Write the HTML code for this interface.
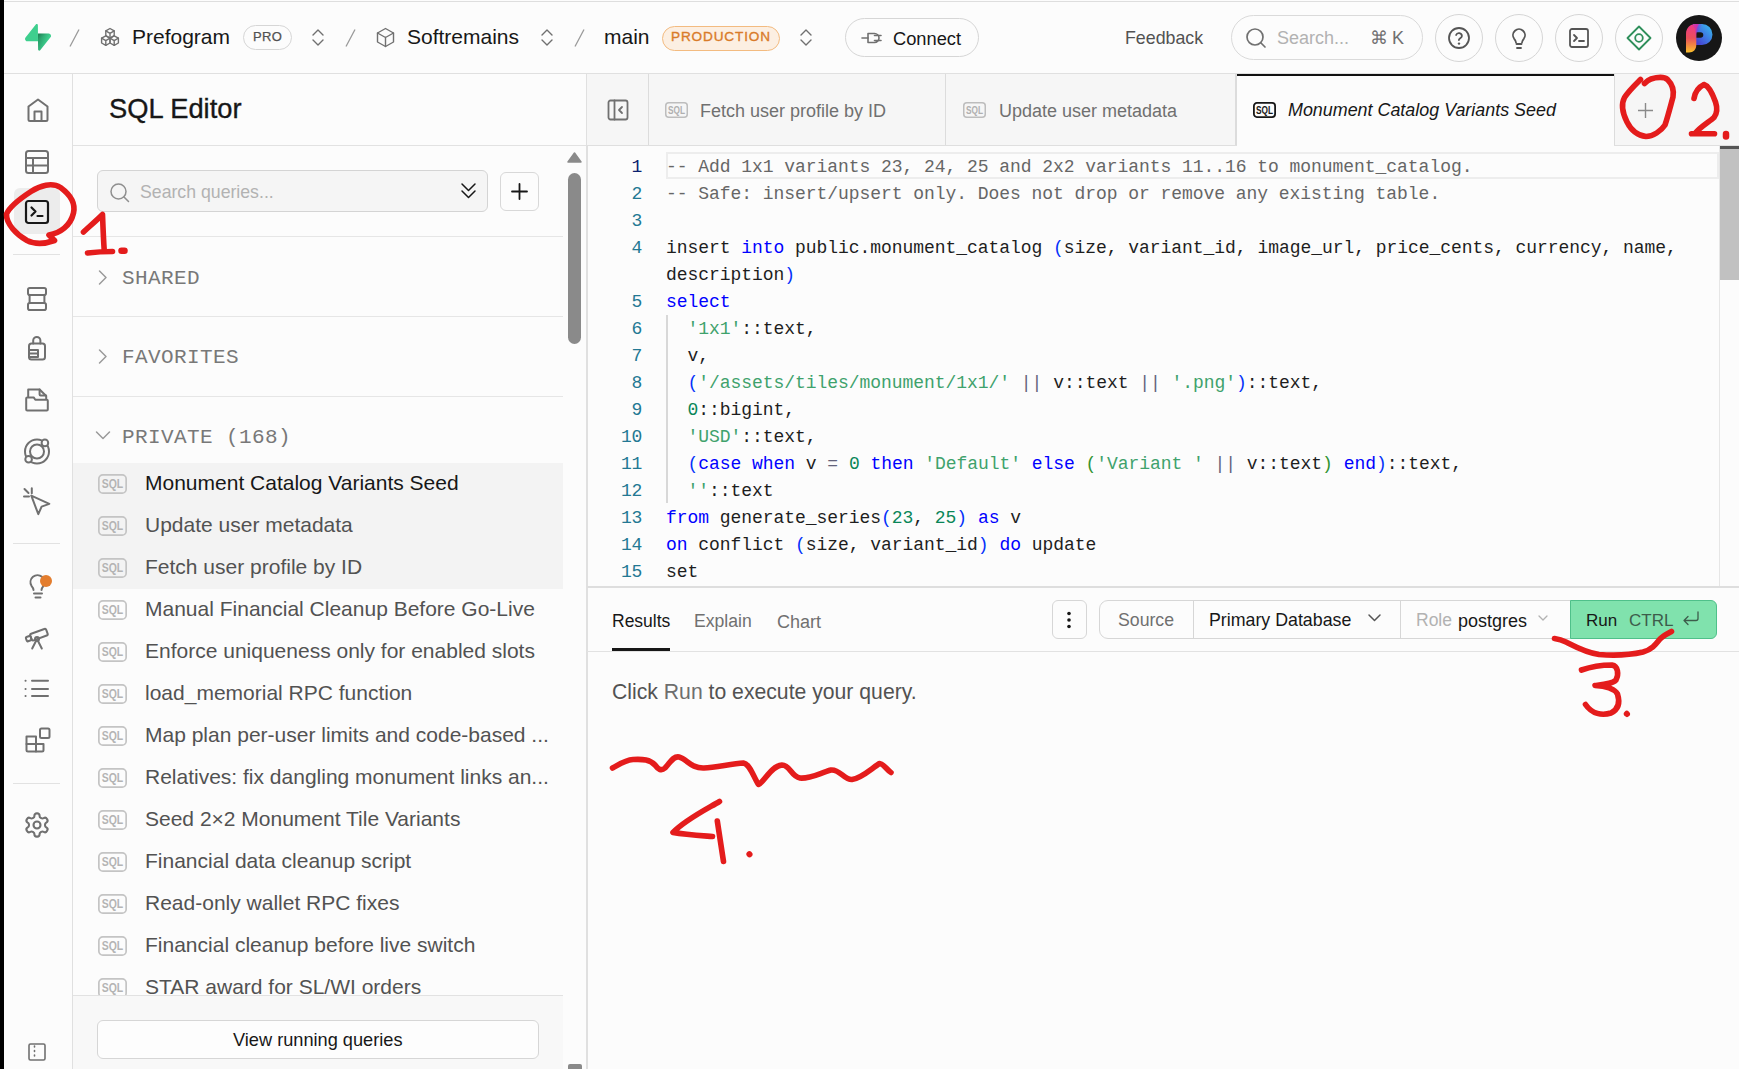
<!DOCTYPE html>
<html><head><meta charset="utf-8">
<style>
*{box-sizing:border-box;margin:0;padding:0}
html,body{width:1739px;height:1069px;overflow:hidden;background:#fcfcfc;font-family:"Liberation Sans",sans-serif;color:#171717}
.a{position:absolute}
svg{display:block}
#strip{left:0;top:0;width:4px;height:1069px;background:#000}
#topline{left:4px;top:1px;width:1735px;height:1px;background:#dedede}
.hb{border-bottom:1px solid #e0e0e0}
.t{white-space:nowrap;position:absolute;line-height:1}
.ic{stroke:#707070;fill:none;stroke-width:2;stroke-linecap:round;stroke-linejoin:round}
.sq{position:absolute;left:98px;width:29px;height:20px;border:1.6px solid #c2c2c2;border-radius:4px}
.sq span{position:absolute;left:3px;top:3.5px;font-size:12.5px;line-height:1;font-weight:bold;color:#b4b4b4;transform:scaleX(.78);transform-origin:0 0;letter-spacing:.3px}
.sqt{position:absolute;top:102px;width:23px;height:17px;border:1.5px solid #b8b8b8;border-radius:3px}
.sqt span{position:absolute;left:2.5px;top:2.5px;font-size:10.5px;line-height:1;font-weight:bold;color:#a8a8a8;transform:scaleX(.8);transform-origin:0 0;letter-spacing:.2px}
.sqt.dk{border:2px solid #171717}.sqt.dk span{color:#171717;left:2px;top:2px}
.cl{white-space:pre;height:27px}.ln{color:#237893}.ln.cur{color:#0b216f}
.k{color:#0000ff}.s{color:#3fa26c}.n{color:#098658}.b1{color:#0431fa}.b2{color:#319331}.o{color:#62627a}.c{color:#666}
</style></head><body>
<div id="strip" class="a"></div>
<div id="topline" class="a"></div>

<!-- HEADER -->
<svg class="a" style="left:25px;top:24px" width="26" height="27" viewBox="0 0 109 113"><defs><linearGradient id="g0" x1="53.97" y1="54.97" x2="94.16" y2="71.83" gradientUnits="userSpaceOnUse"><stop stop-color="#249361"/><stop offset="1" stop-color="#3ECF8E"/></linearGradient><linearGradient id="g1" x1="36.16" y1="30.58" x2="54.48" y2="65.08" gradientUnits="userSpaceOnUse"><stop/><stop offset="1" stop-opacity="0"/></linearGradient></defs><path d="M63.7 110.3C60.8 113.9 55 111.9 55 107.3L54 40.1H99.2C107.4 40.1 112 49.5 106.9 55.9L63.7 110.3Z" fill="url(#g0)"/><path d="M63.7 110.3C60.8 113.9 55 111.9 55 107.3L54 40.1H99.2C107.4 40.1 112 49.5 106.9 55.9L63.7 110.3Z" fill="url(#g1)" fill-opacity=".2"/><path d="M45.3 2.1C48.2-1.5 54-0.4 54 5L54.5 72.3H9.8C1.6 72.3-2.9 62.8 2.2 56.4L45.3 2.1Z" fill="#3ECF8E"/></svg>
<svg class="a" style="left:68px;top:28px" width="13" height="20"><path d="M11 1.5 2 18.5" stroke="#9a9a9a" stroke-width="1.3" fill="none"/></svg>
<svg class="a" style="left:99px;top:27px" width="22" height="21" viewBox="0 0 22 21"><g class="ic" style="stroke:#707070;stroke-width:1.4"><path d="M11 1.5l4.2 2.4v4.8L11 11.1 6.8 8.7V3.9z"/><path d="M6.8 3.9 11 6.3l4.2-2.4M11 6.3v4.8"/><path d="M6.8 8.8l4.2 2.4v4.8L6.8 18.4 2.6 16V11.2z"/><path d="M2.6 11.2l4.2 2.4 4.2-2.4M6.8 13.6v4.8"/><path d="M15.2 8.8l4.2 2.4v4.8l-4.2 2.4L11 16V11.2z"/><path d="M11 11.2l4.2 2.4 4.2-2.4M15.2 13.6v4.8"/></g></svg>
<div class="t" style="left:132px;top:26px;font-size:21px;color:#171717">Prefogram</div>
<div class="a" style="left:243px;top:25px;width:49px;height:25px;border:1px solid #d6d6d6;border-radius:13px"></div>
<div class="t" style="left:253px;top:30px;font-size:13px;letter-spacing:.4px;color:#525252;-webkit-text-stroke:.25px #525252">PRO</div>
<svg class="a" style="left:310px;top:28px" width="16" height="19" viewBox="0 0 16 19"><path class="ic" style="stroke-width:1.4" d="M3 7l5-5 5 5M3 12l5 5 5-5"/></svg>
<svg class="a" style="left:344px;top:28px" width="13" height="20"><path d="M11 1.5 2 18.5" stroke="#9a9a9a" stroke-width="1.3" fill="none"/></svg>
<svg class="a" style="left:375px;top:27px" width="21" height="21" viewBox="0 0 21 21"><g class="ic" style="stroke-width:1.4"><path d="M10.5 1.5l8 4.5v9l-8 4.5-8-4.5V6z"/><path d="M2.5 6l8 4.5 8-4.5M10.5 10.5v9"/></g></svg>
<div class="t" style="left:407px;top:26px;font-size:21px;color:#171717">Softremains</div>
<svg class="a" style="left:539px;top:28px" width="16" height="19" viewBox="0 0 16 19"><path class="ic" style="stroke-width:1.4" d="M3 7l5-5 5 5M3 12l5 5 5-5"/></svg>
<svg class="a" style="left:573px;top:28px" width="13" height="20"><path d="M11 1.5 2 18.5" stroke="#9a9a9a" stroke-width="1.3" fill="none"/></svg>
<div class="t" style="left:604px;top:26px;font-size:21px;color:#171717">main</div>
<div class="a" style="left:662px;top:26px;width:118px;height:25px;border:1px solid #f3bb80;background:#fcefe2;border-radius:13px"></div>
<div class="t" style="left:671px;top:30px;font-size:13.6px;letter-spacing:.85px;color:#d97b29;-webkit-text-stroke:.35px #d97b29">PRODUCTION</div>
<svg class="a" style="left:798px;top:28px" width="16" height="19" viewBox="0 0 16 19"><path class="ic" style="stroke-width:1.4" d="M3 7l5-5 5 5M3 12l5 5 5-5"/></svg>
<div class="a" style="left:845px;top:18px;width:134px;height:39px;border:1px solid #d6d6d6;border-radius:20px"></div>
<svg class="a" style="left:860px;top:30px" width="24" height="16" viewBox="0 0 24 16"><g class="ic" style="stroke-width:1.6"><path d="M2 8h6"/><path d="M8 3.5h6.5a4.5 4.5 0 0 1 0 9H8z"/><path d="M14.5 5.5H21M14.5 10.5H21"/></g></svg>
<div class="t" style="left:893px;top:30px;font-size:18.3px;color:#171717">Connect</div>
<div class="t" style="left:1125px;top:30px;font-size:17.8px;color:#525252">Feedback</div>
<div class="a" style="left:1231px;top:15px;width:192px;height:45px;border:1px solid #dadada;border-radius:23px"></div>
<svg class="a" style="left:1244px;top:26px" width="24" height="24" viewBox="0 0 24 24"><g class="ic" style="stroke-width:1.7"><circle cx="11" cy="11" r="8"/><path d="M17 17l4 4"/></g></svg>
<div class="t" style="left:1277px;top:29px;font-size:18px;color:#b2b2b2">Search...</div>
<div class="t" style="left:1370px;top:29px;font-size:18px;color:#707070">⌘</div>
<div class="t" style="left:1392px;top:29px;font-size:18px;color:#707070">K</div>
<div class="a" style="left:1435px;top:14px;width:48px;height:48px;border:1px solid #d6d6d6;border-radius:50%"></div>
<div class="a" style="left:1495px;top:14px;width:48px;height:48px;border:1px solid #d6d6d6;border-radius:50%"></div>
<div class="a" style="left:1555px;top:14px;width:48px;height:48px;border:1px solid #d6d6d6;border-radius:50%"></div>
<div class="a" style="left:1615px;top:14px;width:48px;height:48px;border:1px solid #d6d6d6;border-radius:50%"></div>
<svg class="a" style="left:1447px;top:26px" width="24" height="24" viewBox="0 0 24 24"><g class="ic" style="stroke:#555;stroke-width:1.8"><circle cx="12" cy="12" r="10"/><path d="M9.1 9a3 3 0 0 1 5.8 1c0 2-3 2.5-3 4"/><path d="M12 17.6h.01" stroke-width="2.4"/></g></svg>
<svg class="a" style="left:1507px;top:26px" width="24" height="24" viewBox="0 0 24 24"><g class="ic" style="stroke:#555;stroke-width:1.8"><path d="M9 16.5c0-1.6-.8-2.6-1.8-3.7A6 6 0 1 1 16.8 12.8c-1 1.1-1.8 2.1-1.8 3.7"/><path d="M9.5 18h5M10 22h4"/></g></svg>
<svg class="a" style="left:1567px;top:26px" width="24" height="24" viewBox="0 0 24 24"><g class="ic" style="stroke:#555;stroke-width:1.8"><rect x="3" y="3" width="18" height="18" rx="2"/><path d="M7 9l3 3-3 3M12 15h5"/></g></svg>
<svg class="a" style="left:1625px;top:24px" width="28" height="28" viewBox="0 0 28 28"><g class="ic" style="stroke:#2f8f5b;stroke-width:1.8"><path d="M14 2.5 25.5 14 14 25.5 2.5 14z"/><circle cx="14" cy="14" r="3.8"/></g></svg>
<div class="a" style="left:1676px;top:15px;width:46px;height:46px;border-radius:50%;background:#161616;overflow:hidden">
<svg width="46" height="46" viewBox="0 0 46 46"><defs><linearGradient id="pa" x1="0" y1="0" x2="0" y2="1"><stop offset="0" stop-color="#f0368a"/><stop offset=".5" stop-color="#e9505a"/><stop offset="1" stop-color="#fbc02a"/></linearGradient><linearGradient id="pb" x1="0" y1="1" x2="1" y2="0"><stop offset="0" stop-color="#4a26c8"/><stop offset=".45" stop-color="#3f6fe0"/><stop offset="1" stop-color="#38c4f0"/></linearGradient><linearGradient id="pc" x1="0" y1="0" x2="1" y2="0"><stop offset="0" stop-color="#b02ad8" stop-opacity="0"/><stop offset=".5" stop-color="#a02ad8" stop-opacity=".9"/><stop offset="1" stop-color="#a02ad8" stop-opacity="0"/></linearGradient></defs>
<path d="M17 9H26A10.5 10.5 0 0 1 26 30H20V22.8H24.5A2.8 2.8 0 0 0 24.5 17.2H17Z" fill="url(#pb)"/>
<path d="M10 19C10 13 14 9 20 9H23C21.5 11 20.3 14 20.3 18V30C20.3 34.5 17.5 37.4 13 37.4H10Z" fill="url(#pa)"/>
<path d="M15 9H27C25 12 22 15 20.3 19V30L19 14z" fill="url(#pc)" opacity=".6"/></svg></div>
<div class="a" style="left:4px;top:73px;width:1735px;height:1px;background:#e0e0e0"></div>

<!-- RAIL -->
<div class="a" style="left:14px;top:188px;width:46px;height:46px;border-radius:6px;background:#ececec"></div>
<div class="a" style="left:13px;top:254px;width:47px;height:1px;background:#e2e2e2"></div>
<div class="a" style="left:13px;top:543px;width:47px;height:1px;background:#e2e2e2"></div>
<div class="a" style="left:13px;top:783px;width:47px;height:1px;background:#e2e2e2"></div>
<!-- home -->
<svg class="a" style="left:25px;top:97px" width="26" height="26" viewBox="0 0 26 26"><g class="ic" style="stroke-width:2"><path d="M3.5 22.5V9.5L13 2.5l9.5 7v13a1.5 1.5 0 0 1-1.5 1.5H5A1.5 1.5 0 0 1 3.5 22.5z"/><path d="M9.5 24V14.5h7V24"/></g></svg>
<!-- table -->
<svg class="a" style="left:24px;top:149px" width="26" height="26" viewBox="0 0 26 26"><g class="ic" style="stroke-width:2"><rect x="2" y="2" width="22" height="22" rx="2.5"/><path d="M2 9h22M2 16.5h22M9 9v15"/></g></svg>
<!-- terminal -->
<svg class="a" style="left:24px;top:199px" width="26" height="26" viewBox="0 0 26 26"><g class="ic" style="stroke:#171717;stroke-width:2.2"><rect x="2" y="2" width="22" height="22" rx="2.5"/><path d="M7.5 8.5l4 4-4 4M13.5 17h5"/></g></svg>
<!-- database -->
<svg class="a" style="left:25px;top:286px" width="24" height="26" viewBox="0 0 24 26"><g class="ic" style="stroke-width:2"><rect x="3" y="2" width="18" height="7" rx="1.8"/><path d="M4.6 9v8M19.4 9v8"/><rect x="3" y="17" width="18" height="7" rx="1.8"/></g></svg>
<!-- lock -->
<svg class="a" style="left:26px;top:334px" width="24" height="28" viewBox="0 0 24 28"><g class="ic" style="stroke-width:2"><path d="M7.2 9.5V6.5a3.6 3.6 0 0 1 7.2 0v3"/><rect x="3" y="9.5" width="16" height="16" rx="2.5"/><path d="M3 16h9v7H3M3 19.6h9"/></g></svg>
<!-- folder -->
<svg class="a" style="left:24px;top:387px" width="28" height="28" viewBox="0 0 28 28"><g class="ic" style="stroke-width:2"><path d="M4.2 9.5V2.5H15.6L22.2 9V12"/><path d="M15.6 2.5V7.5a1 1 0 0 0 1 1H22"/><path d="M2.2 11.4a1 1 0 0 1 1-1H9.7L11.3 12.7H22.8a1 1 0 0 1 1 1V22.5a1 1 0 0 1-1 1H3.2a1 1 0 0 1-1-1z"/></g></svg>
<!-- realtime -->
<svg class="a" style="left:23px;top:437px" width="28" height="29" viewBox="0 0 28 29"><g class="ic" style="stroke-width:2"><circle cx="14" cy="14.5" r="12"/><circle cx="14" cy="14.5" r="7"/><circle cx="21.9" cy="5.9" r="3.3" fill="#fcfcfc"/><circle cx="5.6" cy="22.2" r="3.3" fill="#fcfcfc"/></g></svg>
<!-- edge fn cursor -->
<svg class="a" style="left:23px;top:487px" width="30" height="30" viewBox="0 0 30 30"><g class="ic" style="stroke-width:2"><path d="M8.3 8.6L26.3 16.9 18.6 19.6 15.3 27.2z"/><path d="M1 9.5h5M8.8 1.2v5M1.5 2l4 4"/></g></svg>
<!-- advisor bulb -->
<svg class="a" style="left:25px;top:572px" width="26" height="30" viewBox="0 0 26 30"><g class="ic" style="stroke-width:2"><path d="M8.5 18c0-1.8-1-3-2-4.2A7 7 0 1 1 18.5 13.8c-1 1.2-2 2.4-2 4.2"/><path d="M9 21.5h8M10.5 25.5h5"/></g></svg>

<div class="a" style="left:40px;top:575px;width:12px;height:12px;border-radius:50%;background:#e37d2e"></div>
<!-- telescope -->
<svg class="a" style="left:23px;top:625px" width="28" height="28" viewBox="0 0 28 28"><g class="ic" style="stroke-width:2"><g transform="rotate(-20 15 10)"><rect x="7.5" y="6.5" width="17" height="7" rx="1.5"/><rect x="2.5" y="8" width="5" height="4.5" rx="1"/></g><circle cx="14" cy="14" r="2"/><path d="M13 16l-3.8 7.5M15 16l3.8 7.5"/></g></svg>
<!-- list -->
<svg class="a" style="left:23px;top:677px" width="28" height="24" viewBox="0 0 28 24"><g class="ic" style="stroke-width:2"><path d="M9 3.7h16M9 11.9h16M9 19.1h16"/><path d="M2.5 3.7h.1M2.5 11.9h.1M2.5 19.1h.1"/></g></svg>
<!-- extensions -->
<svg class="a" style="left:24px;top:726px" width="28" height="28" viewBox="0 0 28 28"><g class="ic" style="stroke-width:2"><path d="M2.5 10.5h9.5v15H4a1.5 1.5 0 0 1-1.5-1.5z"/><path d="M2.5 18h17v6a1.5 1.5 0 0 1-1.5 1.5h-6"/><rect x="16" y="2.5" width="9.5" height="9.5" rx="1.5"/></g></svg>
<!-- settings -->
<svg class="a" style="left:23px;top:811px" width="28" height="28" viewBox="0 0 24 24"><g class="ic" style="stroke-width:1.8"><path d="M12.22 2h-.44a2 2 0 0 0-2 2v.18a2 2 0 0 1-1 1.73l-.43.25a2 2 0 0 1-2 0l-.15-.08a2 2 0 0 0-2.73.73l-.22.38a2 2 0 0 0 .73 2.73l.15.1a2 2 0 0 1 1 1.72v.51a2 2 0 0 1-1 1.74l-.15.09a2 2 0 0 0-.73 2.73l.22.38a2 2 0 0 0 2.73.73l.15-.08a2 2 0 0 1 2 0l.43.25a2 2 0 0 1 1 1.73V20a2 2 0 0 0 2 2h.44a2 2 0 0 0 2-2v-.18a2 2 0 0 1 1-1.73l.43-.25a2 2 0 0 1 2 0l.15.08a2 2 0 0 0 2.73-.73l.22-.39a2 2 0 0 0-.73-2.73l-.15-.08a2 2 0 0 1-1-1.74v-.5a2 2 0 0 1 1-1.74l.15-.09a2 2 0 0 0 .73-2.73l-.22-.38a2 2 0 0 0-2.73-.73l-.15.08a2 2 0 0 1-2 0l-.43-.25a2 2 0 0 1-1-1.73V4a2 2 0 0 0-2-2z"/><circle cx="12" cy="12" r="3"/></g></svg>
<!-- bottom -->
<svg class="a" style="left:27px;top:1042px" width="20" height="20" viewBox="0 0 20 20"><g class="ic" style="stroke-width:1.6"><rect x="2" y="2" width="16" height="16" rx="1.5"/><path d="M7.5 4v1M7.5 8.5v1M7.5 13v1"/></g></svg>
<div class="a" style="left:72px;top:74px;width:1px;height:995px;background:#e0e0e0"></div>

<!-- PANEL -->
<div class="t" style="left:109px;top:95px;font-size:27.3px;color:#171717;-webkit-text-stroke:.35px #171717">SQL Editor</div>
<div class="a" style="left:73px;top:145px;width:513px;height:1px;background:#e2e2e2"></div>
<div class="a" style="left:97px;top:170px;width:391px;height:42px;border:1px solid #d4d4d4;background:#f5f5f5;border-radius:6px"></div>
<svg class="a" style="left:109px;top:182px" width="21" height="21" viewBox="0 0 21 21"><g class="ic" style="stroke:#8f8f8f;stroke-width:1.5"><circle cx="9.5" cy="9.5" r="7.5"/><path d="M15 15l4.5 4.5"/></g></svg>
<div class="t" style="left:140px;top:184px;font-size:17.7px;color:#b2b2b2">Search queries...</div>
<svg class="a" style="left:460px;top:181px" width="17" height="19" viewBox="0 0 17 19"><g class="ic" style="stroke:#171717;stroke-width:1.5"><path d="M2 3l6.5 6.5L15 3M2 10l6.5 6.5L15 10"/></g></svg>
<div class="a" style="left:500px;top:172px;width:39px;height:39px;border:1px solid #d8d8d8;background:#fcfcfc;border-radius:6px"></div>
<svg class="a" style="left:510px;top:182px" width="19" height="19" viewBox="0 0 19 19"><path d="M9.5 2v15M2 9.5h15" stroke="#171717" stroke-width="1.8" stroke-linecap="round"/></svg>
<div class="a" style="left:73px;top:236px;width:490px;height:1px;background:#e6e6e6"></div>
<svg class="a" style="left:96px;top:269px" width="14" height="17" viewBox="0 0 14 17"><path class="ic" style="stroke:#9a9a9a;stroke-width:1.5" d="M3.5 2l6.5 6.5L3.5 15"/></svg>
<div class="t mono" style="left:122px;top:268px;font-family:'Liberation Mono',monospace;font-size:21px;letter-spacing:.4px;color:#787878">SHARED</div>
<div class="a" style="left:73px;top:316px;width:490px;height:1px;background:#e6e6e6"></div>
<svg class="a" style="left:96px;top:348px" width="14" height="17" viewBox="0 0 14 17"><path class="ic" style="stroke:#9a9a9a;stroke-width:1.5" d="M3.5 2l6.5 6.5L3.5 15"/></svg>
<div class="t mono" style="left:122px;top:347px;font-family:'Liberation Mono',monospace;font-size:21px;letter-spacing:.4px;color:#787878">FAVORITES</div>
<div class="a" style="left:73px;top:396px;width:490px;height:1px;background:#e6e6e6"></div>
<svg class="a" style="left:94px;top:429px" width="18" height="14" viewBox="0 0 18 14"><path class="ic" style="stroke:#9a9a9a;stroke-width:1.5" d="M2.5 3l6.5 6.5L15.5 3"/></svg>
<div class="t mono" style="left:122px;top:427px;font-family:'Liberation Mono',monospace;font-size:21px;letter-spacing:.4px;color:#787878">PRIVATE (168)</div>
<div class="a" style="left:73px;top:463px;width:490px;height:126px;background:#f3f3f3"></div>
<div id="list"></div>
<svg class="a" style="left:98px;top:474px" width="29" height="20" viewBox="0 0 29 20"><rect x="0.85" y="0.85" width="27.3" height="18.3" rx="4" fill="none" stroke="#c4c4c4" stroke-width="1.7"/><text x="14.5" y="14.3" text-anchor="middle" font-family="Liberation Sans" font-weight="bold" font-size="12.5" textLength="21.5" lengthAdjust="spacingAndGlyphs" fill="#b4b4b4">SQL</text></svg><div class="t" style="left:145px;top:472px;font-size:21px;color:#171717">Monument Catalog Variants Seed</div>
<svg class="a" style="left:98px;top:516px" width="29" height="20" viewBox="0 0 29 20"><rect x="0.85" y="0.85" width="27.3" height="18.3" rx="4" fill="none" stroke="#c4c4c4" stroke-width="1.7"/><text x="14.5" y="14.3" text-anchor="middle" font-family="Liberation Sans" font-weight="bold" font-size="12.5" textLength="21.5" lengthAdjust="spacingAndGlyphs" fill="#b4b4b4">SQL</text></svg><div class="t" style="left:145px;top:514px;font-size:21px;color:#525252">Update user metadata</div>
<svg class="a" style="left:98px;top:558px" width="29" height="20" viewBox="0 0 29 20"><rect x="0.85" y="0.85" width="27.3" height="18.3" rx="4" fill="none" stroke="#c4c4c4" stroke-width="1.7"/><text x="14.5" y="14.3" text-anchor="middle" font-family="Liberation Sans" font-weight="bold" font-size="12.5" textLength="21.5" lengthAdjust="spacingAndGlyphs" fill="#b4b4b4">SQL</text></svg><div class="t" style="left:145px;top:556px;font-size:21px;color:#525252">Fetch user profile by ID</div>
<svg class="a" style="left:98px;top:600px" width="29" height="20" viewBox="0 0 29 20"><rect x="0.85" y="0.85" width="27.3" height="18.3" rx="4" fill="none" stroke="#c4c4c4" stroke-width="1.7"/><text x="14.5" y="14.3" text-anchor="middle" font-family="Liberation Sans" font-weight="bold" font-size="12.5" textLength="21.5" lengthAdjust="spacingAndGlyphs" fill="#b4b4b4">SQL</text></svg><div class="t" style="left:145px;top:598px;font-size:21px;color:#525252">Manual Financial Cleanup Before Go-Live</div>
<svg class="a" style="left:98px;top:642px" width="29" height="20" viewBox="0 0 29 20"><rect x="0.85" y="0.85" width="27.3" height="18.3" rx="4" fill="none" stroke="#c4c4c4" stroke-width="1.7"/><text x="14.5" y="14.3" text-anchor="middle" font-family="Liberation Sans" font-weight="bold" font-size="12.5" textLength="21.5" lengthAdjust="spacingAndGlyphs" fill="#b4b4b4">SQL</text></svg><div class="t" style="left:145px;top:640px;font-size:21px;color:#525252">Enforce uniqueness only for enabled slots</div>
<svg class="a" style="left:98px;top:684px" width="29" height="20" viewBox="0 0 29 20"><rect x="0.85" y="0.85" width="27.3" height="18.3" rx="4" fill="none" stroke="#c4c4c4" stroke-width="1.7"/><text x="14.5" y="14.3" text-anchor="middle" font-family="Liberation Sans" font-weight="bold" font-size="12.5" textLength="21.5" lengthAdjust="spacingAndGlyphs" fill="#b4b4b4">SQL</text></svg><div class="t" style="left:145px;top:682px;font-size:21px;color:#525252">load_memorial RPC function</div>
<svg class="a" style="left:98px;top:726px" width="29" height="20" viewBox="0 0 29 20"><rect x="0.85" y="0.85" width="27.3" height="18.3" rx="4" fill="none" stroke="#c4c4c4" stroke-width="1.7"/><text x="14.5" y="14.3" text-anchor="middle" font-family="Liberation Sans" font-weight="bold" font-size="12.5" textLength="21.5" lengthAdjust="spacingAndGlyphs" fill="#b4b4b4">SQL</text></svg><div class="t" style="left:145px;top:724px;font-size:21px;color:#525252">Map plan per-user limits and code-based ...</div>
<svg class="a" style="left:98px;top:768px" width="29" height="20" viewBox="0 0 29 20"><rect x="0.85" y="0.85" width="27.3" height="18.3" rx="4" fill="none" stroke="#c4c4c4" stroke-width="1.7"/><text x="14.5" y="14.3" text-anchor="middle" font-family="Liberation Sans" font-weight="bold" font-size="12.5" textLength="21.5" lengthAdjust="spacingAndGlyphs" fill="#b4b4b4">SQL</text></svg><div class="t" style="left:145px;top:766px;font-size:21px;color:#525252">Relatives: fix dangling monument links an...</div>
<svg class="a" style="left:98px;top:810px" width="29" height="20" viewBox="0 0 29 20"><rect x="0.85" y="0.85" width="27.3" height="18.3" rx="4" fill="none" stroke="#c4c4c4" stroke-width="1.7"/><text x="14.5" y="14.3" text-anchor="middle" font-family="Liberation Sans" font-weight="bold" font-size="12.5" textLength="21.5" lengthAdjust="spacingAndGlyphs" fill="#b4b4b4">SQL</text></svg><div class="t" style="left:145px;top:808px;font-size:21px;color:#525252">Seed 2×2 Monument Tile Variants</div>
<svg class="a" style="left:98px;top:852px" width="29" height="20" viewBox="0 0 29 20"><rect x="0.85" y="0.85" width="27.3" height="18.3" rx="4" fill="none" stroke="#c4c4c4" stroke-width="1.7"/><text x="14.5" y="14.3" text-anchor="middle" font-family="Liberation Sans" font-weight="bold" font-size="12.5" textLength="21.5" lengthAdjust="spacingAndGlyphs" fill="#b4b4b4">SQL</text></svg><div class="t" style="left:145px;top:850px;font-size:21px;color:#525252">Financial data cleanup script</div>
<svg class="a" style="left:98px;top:894px" width="29" height="20" viewBox="0 0 29 20"><rect x="0.85" y="0.85" width="27.3" height="18.3" rx="4" fill="none" stroke="#c4c4c4" stroke-width="1.7"/><text x="14.5" y="14.3" text-anchor="middle" font-family="Liberation Sans" font-weight="bold" font-size="12.5" textLength="21.5" lengthAdjust="spacingAndGlyphs" fill="#b4b4b4">SQL</text></svg><div class="t" style="left:145px;top:892px;font-size:21px;color:#525252">Read-only wallet RPC fixes</div>
<svg class="a" style="left:98px;top:936px" width="29" height="20" viewBox="0 0 29 20"><rect x="0.85" y="0.85" width="27.3" height="18.3" rx="4" fill="none" stroke="#c4c4c4" stroke-width="1.7"/><text x="14.5" y="14.3" text-anchor="middle" font-family="Liberation Sans" font-weight="bold" font-size="12.5" textLength="21.5" lengthAdjust="spacingAndGlyphs" fill="#b4b4b4">SQL</text></svg><div class="t" style="left:145px;top:934px;font-size:21px;color:#525252">Financial cleanup before live switch</div>
<svg class="a" style="left:98px;top:978px" width="29" height="20" viewBox="0 0 29 20"><rect x="0.85" y="0.85" width="27.3" height="18.3" rx="4" fill="none" stroke="#c4c4c4" stroke-width="1.7"/><text x="14.5" y="14.3" text-anchor="middle" font-family="Liberation Sans" font-weight="bold" font-size="12.5" textLength="21.5" lengthAdjust="spacingAndGlyphs" fill="#b4b4b4">SQL</text></svg><div class="t" style="left:145px;top:976px;font-size:21px;color:#525252">STAR award for SL/WI orders</div>
<div class="a" style="left:73px;top:995px;width:490px;height:74px;background:#f8f8f8;border-top:1px solid #e2e2e2"></div>
<div class="a" style="left:97px;top:1020px;width:442px;height:39px;border:1px solid #d6d6d6;background:#fdfdfd;border-radius:6px"></div>
<div class="t" style="left:233px;top:1031px;font-size:18.2px;color:#171717">View running queries</div>
<!-- panel scrollbar -->
<svg class="a" style="left:566px;top:151px" width="17" height="13" viewBox="0 0 17 13"><path d="M8.5 2L15 11H2z" fill="#8a8a8a" stroke="#8a8a8a" stroke-width="1.5" stroke-linejoin="round"/></svg>
<div class="a" style="left:568px;top:173px;width:13px;height:171px;border-radius:7px;background:#8a8a8a"></div>
<div class="a" style="left:568px;top:1064px;width:14px;height:5px;border-radius:2px 2px 0 0;background:#8a8a8a"></div>
<div class="a" style="left:586px;top:74px;width:2px;height:995px;background:#e0e0e0"></div>

<!-- MAIN -->
<div class="a" style="left:587px;top:74px;width:1152px;height:71px;background:#f6f6f6"></div>
<div class="a" style="left:587px;top:145px;width:1152px;height:1px;background:#dfdfdf"></div>
<div class="a" style="left:648px;top:74px;width:1px;height:71px;background:#dcdcdc"></div>
<svg class="a" style="left:607px;top:99px" width="22" height="22" viewBox="0 0 22 22"><g class="ic" style="stroke-width:1.8"><rect x="1.5" y="1.5" width="19" height="19" rx="2"/><path d="M7.5 1.5v19M15 8l-3 3 3 3"/></g></svg>
<svg class="a" style="left:665px;top:102px" width="23" height="16" viewBox="0 0 23 16"><rect x="0.75" y="0.75" width="21.5" height="14.5" rx="3" fill="none" stroke="#bdbdbd" stroke-width="1.5"/><text x="11.5" y="11.9" text-anchor="middle" font-family="Liberation Sans" font-weight="bold" font-size="10.8" textLength="17" lengthAdjust="spacingAndGlyphs" fill="#b0b0b0">SQL</text></svg>
<div class="t" style="left:700px;top:102px;font-size:18px;color:#707070">Fetch user profile by ID</div>
<div class="a" style="left:945px;top:74px;width:1px;height:71px;background:#dcdcdc"></div>
<svg class="a" style="left:963px;top:102px" width="23" height="16" viewBox="0 0 23 16"><rect x="0.75" y="0.75" width="21.5" height="14.5" rx="3" fill="none" stroke="#bdbdbd" stroke-width="1.5"/><text x="11.5" y="11.9" text-anchor="middle" font-family="Liberation Sans" font-weight="bold" font-size="10.8" textLength="17" lengthAdjust="spacingAndGlyphs" fill="#b0b0b0">SQL</text></svg>
<div class="t" style="left:999px;top:102px;font-size:18px;color:#707070">Update user metadata</div>
<div class="a" style="left:1235px;top:74px;width:2px;height:71px;background:#dcdcdc"></div>
<div class="a" style="left:1237px;top:74px;width:377px;height:72px;background:#fcfcfc;border-top:2.5px solid #111"></div>
<svg class="a" style="left:1253px;top:102px" width="23" height="16" viewBox="0 0 23 16"><rect x="0.9" y="0.9" width="21.2" height="14.2" rx="3" fill="none" stroke="#171717" stroke-width="1.8"/><text x="11.5" y="11.9" text-anchor="middle" font-family="Liberation Sans" font-weight="bold" font-size="10.8" textLength="17" lengthAdjust="spacingAndGlyphs" fill="#171717">SQL</text></svg>
<div class="t" style="left:1288px;top:102px;font-size:17.9px;color:#171717;font-style:italic">Monument Catalog Variants Seed</div>
<div class="a" style="left:1614px;top:74px;width:1px;height:71px;background:#dcdcdc"></div>
<svg class="a" style="left:1637px;top:102px" width="17" height="17" viewBox="0 0 17 17"><path d="M8.5 1v15M1 8.5h15" stroke="#8a8a8a" stroke-width="1.4"/></svg>

<!-- editor -->
<div class="a" style="left:666px;top:152px;width:1053px;height:27px;border:2px solid #ededed"></div>
<div class="a" style="left:666px;top:315px;width:1.5px;height:188px;background:#d8d8d8"></div>
<div class="a" style="left:592px;top:154px;width:50px;font-family:'Liberation Mono',monospace;font-size:18px;line-height:27px;text-align:right;letter-spacing:-.25px">
<div class="ln cur">1</div>
<div class="ln">2</div>
<div class="ln">3</div>
<div class="ln">4</div>
<div class="ln">&nbsp;</div>
<div class="ln">5</div>
<div class="ln">6</div>
<div class="ln">7</div>
<div class="ln">8</div>
<div class="ln">9</div>
<div class="ln">10</div>
<div class="ln">11</div>
<div class="ln">12</div>
<div class="ln">13</div>
<div class="ln">14</div>
<div class="ln">15</div>
</div>
<div class="a" style="left:666px;top:154px;font-family:'Liberation Mono',monospace;font-size:18px;line-height:27px;letter-spacing:-.05px;color:#1e1e1e">
<div class="cl"><span class="c">-- Add 1x1 variants 23, 24, 25 and 2x2 variants 11..16 to monument_catalog.</span></div>
<div class="cl"><span class="c">-- Safe: insert/upsert only. Does not drop or remove any existing table.</span></div>
<div class="cl">&nbsp;</div>
<div class="cl">insert <span class="k">into</span> public.monument_catalog <span class="b1">(</span>size, variant_id, image_url, price_cents, currency, name,</div>
<div class="cl">description<span class="b1">)</span></div>
<div class="cl"><span class="k">select</span></div>
<div class="cl">  <span class="s">'1x1'</span>::text,</div>
<div class="cl">  v,</div>
<div class="cl">  <span class="b1">(</span><span class="s">'/assets/tiles/monument/1x1/'</span> <span class="o">||</span> v::text <span class="o">||</span> <span class="s">'.png'</span><span class="b1">)</span>::text,</div>
<div class="cl">  <span class="n">0</span>::bigint,</div>
<div class="cl">  <span class="s">'USD'</span>::text,</div>
<div class="cl">  <span class="b1">(</span><span class="k">case</span> <span class="k">when</span> v <span class="o">=</span> <span class="n">0</span> <span class="k">then</span> <span class="s">'Default'</span> <span class="k">else</span> <span class="b2">(</span><span class="s">'Variant '</span> <span class="o">||</span> v::text<span class="b2">)</span> <span class="k">end</span><span class="b1">)</span>::text,</div>
<div class="cl">  <span class="s">''</span>::text</div>
<div class="cl"><span class="k">from</span> generate_series<span class="b1">(</span><span class="n">23</span>, <span class="n">25</span><span class="b1">)</span> <span class="k">as</span> v</div>
<div class="cl"><span class="k">on</span> conflict <span class="b1">(</span>size, variant_id<span class="b1">)</span> <span class="k">do</span> update</div>
<div class="cl">set</div>
</div>
<div class="a" style="left:1719px;top:146px;width:1px;height:441px;background:#e6e6e6"></div>
<div class="a" style="left:1720px;top:146px;width:19px;height:3px;background:#555"></div>
<div class="a" style="left:1720px;top:149px;width:19px;height:131px;background:#c1c1c1"></div>
<div class="a" style="left:587px;top:586px;width:1152px;height:2px;background:#dedede"></div>

<!-- results toolbar -->
<div class="t" style="left:612px;top:612.5px;font-size:17.5px;color:#171717">Results</div>
<div class="a" style="left:612px;top:648px;width:58px;height:3px;background:#171717"></div>
<div class="t" style="left:694px;top:612.5px;font-size:17.6px;color:#707070">Explain</div>
<div class="t" style="left:777px;top:612.5px;font-size:18px;color:#707070">Chart</div>
<div class="a" style="left:587px;top:651px;width:1152px;height:1px;background:#e2e2e2"></div>
<div class="a" style="left:1052px;top:600px;width:35px;height:39px;border:1px solid #d6d6d6;border-radius:6px;background:#fcfcfc"></div>
<svg class="a" style="left:1066px;top:610px" width="6" height="20" viewBox="0 0 6 20"><circle cx="3" cy="3.5" r="1.8" fill="#171717"/><circle cx="3" cy="10" r="1.8" fill="#171717"/><circle cx="3" cy="16.5" r="1.8" fill="#171717"/></svg>
<div class="a" style="left:1099px;top:600px;width:473px;height:39px;border:1px solid #d6d6d6;border-radius:9px 0 0 9px;background:#fcfcfc"></div>
<div class="a" style="left:1193px;top:600px;width:1px;height:39px;background:#d6d6d6"></div>
<div class="a" style="left:1400px;top:600px;width:1px;height:39px;background:#d6d6d6"></div>
<div class="t" style="left:1118px;top:612px;font-size:17.7px;color:#707070">Source</div>
<div class="t" style="left:1209px;top:612px;font-size:17.8px;color:#171717">Primary Database</div>
<svg class="a" style="left:1367px;top:613px" width="15" height="10" viewBox="0 0 15 10"><path class="ic" style="stroke:#555;stroke-width:1.5" d="M2 2l5.5 5.5L13 2"/></svg>
<div class="t" style="left:1416px;top:612px;font-size:17.5px;color:#b2b2b2">Role</div>
<div class="t" style="left:1458px;top:612px;font-size:18px;color:#171717">postgres</div>
<svg class="a" style="left:1537px;top:614px" width="12" height="9" viewBox="0 0 12 9"><path class="ic" style="stroke:#b2b2b2;stroke-width:1.3" d="M2 2l4 4 4-4"/></svg>
<div class="a" style="left:1570px;top:600px;width:147px;height:39px;border:1px solid #4fc08a;border-radius:0 6px 6px 0;background:#80e2ad"></div>
<div class="t" style="left:1586px;top:612px;font-size:17px;color:#171717">Run</div>
<div class="t" style="left:1629px;top:612px;font-size:17px;color:#3d5c4b">CTRL</div>
<svg class="a" style="left:1681px;top:610px" width="20" height="18" viewBox="0 0 20 18"><g class="ic" style="stroke:#3d5c4b;stroke-width:1.3"><path d="M17 2v6.5a2 2 0 0 1-2 2H3M7 6.5l-4 4 4 4"/></g></svg>

<div class="t" style="left:612px;top:681px;font-size:21.2px;color:#525252">Click <span style="color:#6e6e6e">Run</span> to execute your query.</div>

<!-- ANNOTATIONS -->
<svg class="a" style="left:0;top:0" width="1739" height="1069" viewBox="0 0 1739 1069"><g fill="none" stroke="#e41c1c" stroke-width="5.6" stroke-linecap="round" stroke-linejoin="round">
<path d="M54.5 240.5L49 235C60 233 70.5 226 73.5 213C76 202 68 193 60.5 187.5C52 182 40 185.5 31 191.5C21 198 9.5 207 6.5 214C6 224 17 235 27 240.5C35 244.5 46 243.5 54.5 240.5"/>
<path d="M83.5 232C90 226 97 220 102.5 214.5C103 228 103.5 240 104.3 251.5M87.5 253C96 252 104 251.5 112.5 251.5"/>
<path d="M121.5 250.8L124.5 250.8" stroke-width="6.5"/>
<path d="M1640.5 79.5C1636 84 1629 90.5 1624.5 97.5C1621 104 1622.5 113 1627 122C1631 130 1637 135.5 1646 136.5C1653 136.5 1661 131 1665 125C1668 116 1670.5 106 1673 97C1674.5 88 1671 83 1667.5 79.5C1664 76.5 1656 77.5 1651 79C1648 80 1646 82 1644.5 83.5"/>
<path d="M1694 98.5C1695 92 1699 87 1704 84.5C1709 86 1713 95 1715.5 102C1717.5 108 1717.5 113 1714 117.5C1709 122 1700 127 1695 133.5M1691.5 133.8L1714.5 133.8"/>
<path d="M1726 134L1726 136.5" stroke-width="6.5"/>
<path d="M1554.5 638.5C1558 639 1562 640 1566 642C1574 646 1585 652.5 1599 654.5C1612 655.5 1630 655 1643 652C1652 649.5 1656 644 1660 639C1663.5 635.5 1668 633.5 1671.5 631.5"/>
<path d="M1581.5 670C1590 667 1600 665 1612 665C1618 666 1619 674 1616 680C1612 684 1604 684.5 1595 685.5C1606 686 1614 688 1617.5 694C1620 702 1619 709 1611 713C1602 716 1592 714 1585.5 704.5"/>
<path d="M1626.8 713.8L1627 714" stroke-width="6"/>
<path d="M612.5 768C619 764.5 625 760 633 759.5C643 759 650 759.5 655 765C658 769 661 771.5 665 768C670 763 673 756 679 757C687 759 691 768.5 704 768C716 767 732 764 743.5 763C750 764 754 778 758.5 784.5C764 782 771 766 782 765C790 765 791 776 800 778C810 779 820 773 831 770C840 769 844 780 852 779.5C862 778 872 768 879.5 763.5C884 764 887 770 891 772.5"/>
<path d="M719.5 801.5C705 810 685 820 673 832.5C685 834.5 700 835.5 712.5 836.5M717.3 821L723.5 861.5"/>
<path d="M749.4 854.2L749.5 854.3" stroke-width="6"/>
</g></svg>
</body></html>
